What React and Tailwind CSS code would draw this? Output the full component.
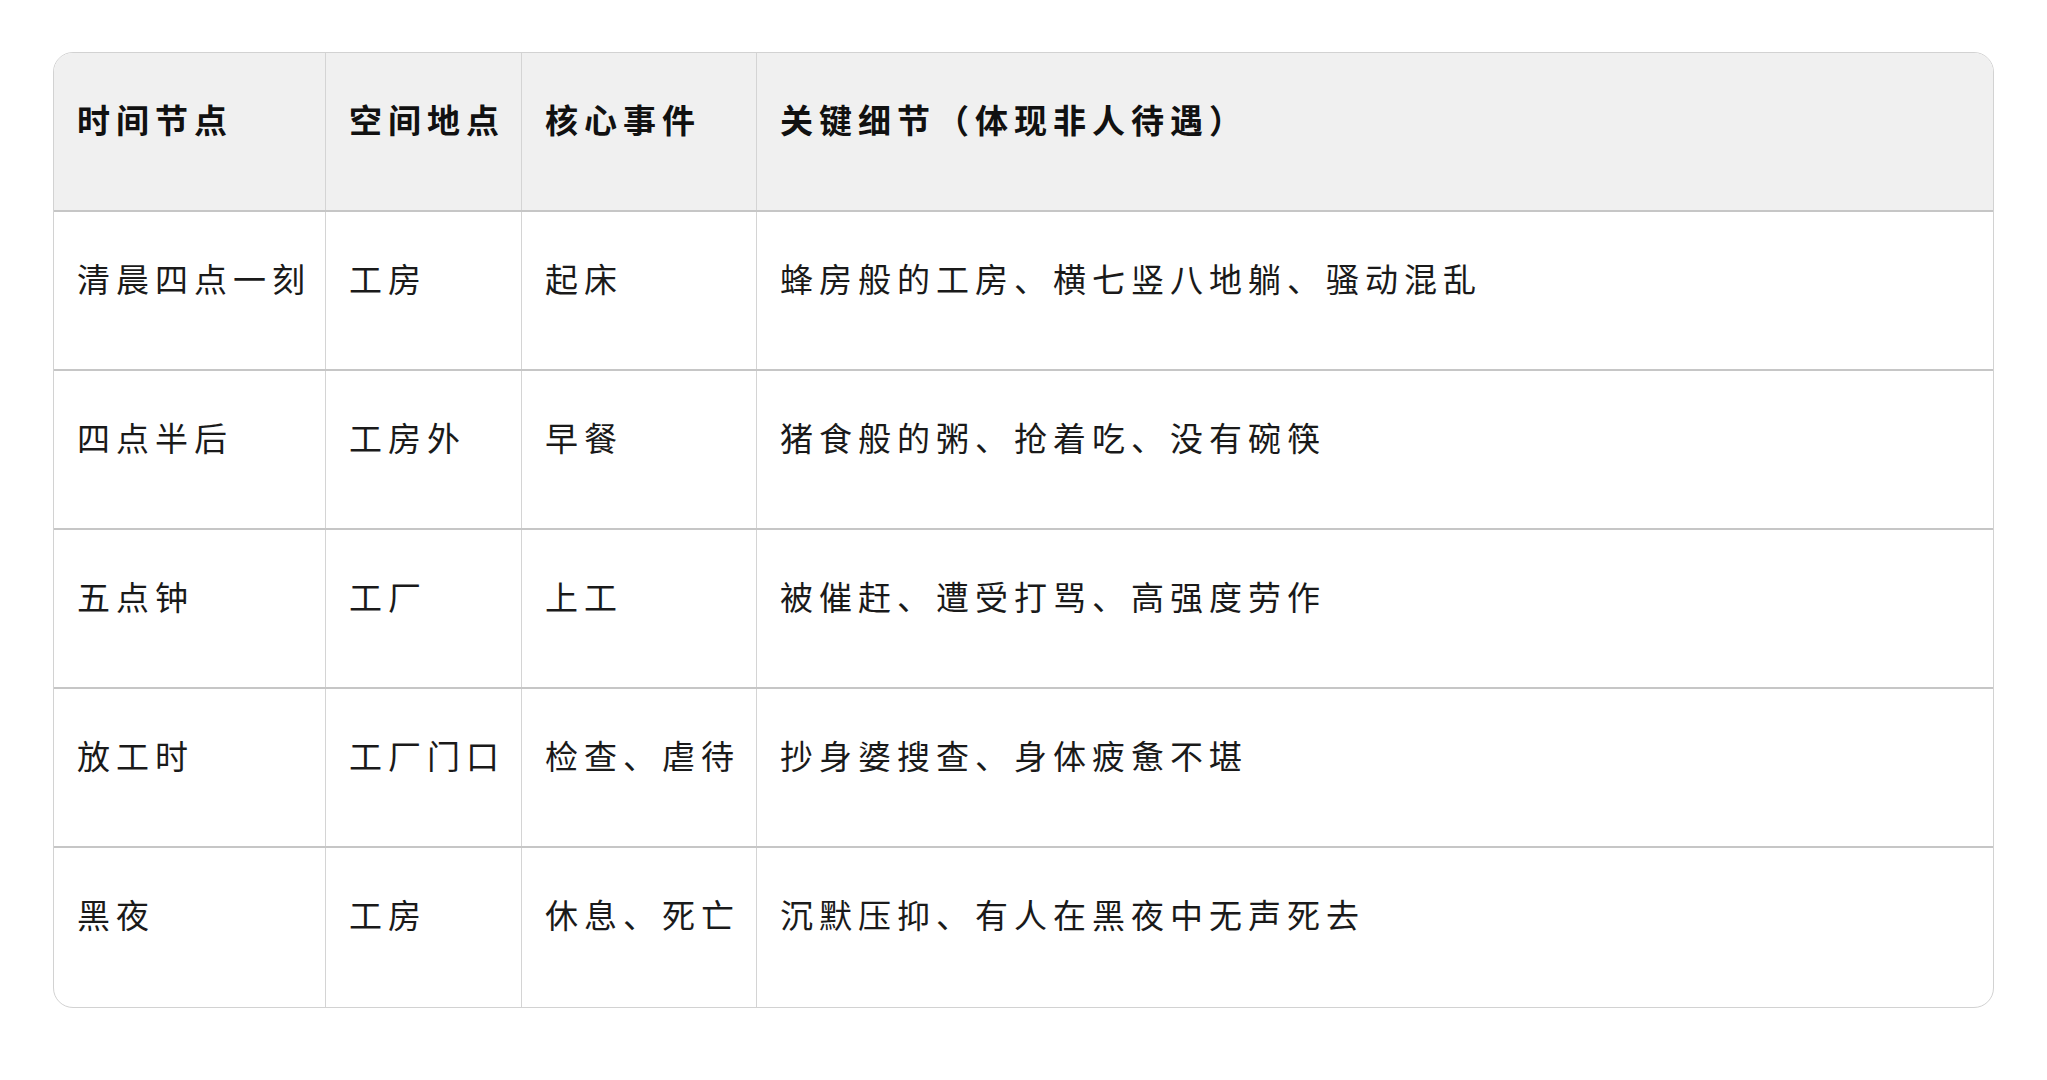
import React from "react";

const header = ["时间节点", "空间地点", "核心事件", "关键细节（体现非人待遇）"];
const rows = [
  ["清晨四点一刻", "工房", "起床", "蜂房般的工房、横七竖八地躺、骚动混乱"],
  ["四点半后", "工房外", "早餐", "猪食般的粥、抢着吃、没有碗筷"],
  ["五点钟", "工厂", "上工", "被催赶、遭受打骂、高强度劳作"],
  ["放工时", "工厂门口", "检查、虐待", "抄身婆搜查、身体疲惫不堪"],
  ["黑夜", "工房", "休息、死亡", "沉默压抑、有人在黑夜中无声死去"],
];

export default function App() {
  return (
    <div
      className="w-[2047px] h-[1080px] bg-white pt-[52px] pl-[53px]"
      style={{ fontFamily: '"Noto Sans CJK SC", "Noto Sans", sans-serif' }}
    >
      <div className="w-[1941px] border border-[#d2d2d2] rounded-[20px] overflow-hidden">
        <div className="grid grid-cols-[272px_196px_235px_1fr] h-[159px] bg-[#f0f0f0] border-b-2 border-[#c6c6c6]">
          {header.map((h, i) => (
            <div
              key={i}
              className={`pl-[23px] pt-[48px] text-[33px] leading-[36px] tracking-[6px] font-bold text-[#111111] ${i < 3 ? "border-r border-[#d4d4d4]" : ""}`}
            >
              {h}
            </div>
          ))}
        </div>
        {rows.map((r, ri) => (
          <div
            key={ri}
            className={`grid grid-cols-[272px_196px_235px_1fr] ${ri < rows.length - 1 ? "h-[159px] border-b-2 border-[#c6c6c6]" : "h-[159px]"}`}
          >
            {r.map((c, i) => (
              <div
                key={i}
                className={`pl-[23px] pt-[48px] text-[33px] leading-[36px] tracking-[6px] text-[#1a1a1a] whitespace-nowrap ${i < 3 ? "border-r border-[#d4d4d4]" : ""}`}
              >
                {c}
              </div>
            ))}
          </div>
        ))}
      </div>
    </div>
  );
}
